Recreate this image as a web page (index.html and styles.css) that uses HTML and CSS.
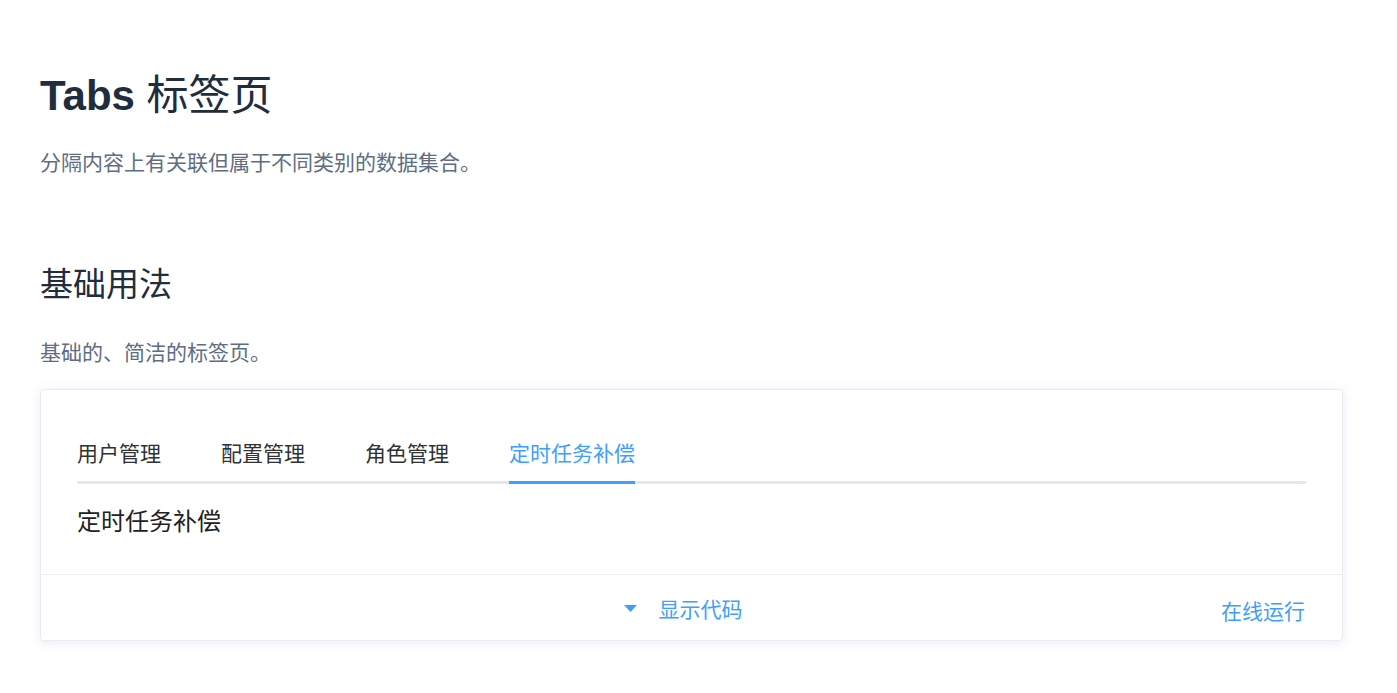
FILE: index.html
```html
<!DOCTYPE html>
<html lang="zh-CN">
<head>
    <meta charset="UTF-8">
    <meta name="viewport" content="width=device-width, initial-scale=1.0">
    <title>Tabs 标签页</title>
    <link rel="stylesheet" href="styles.css">
</head>
<body>
    <div class="page-component">
        <h2><strong>Tabs</strong> 标签页</h2>
        <p>分隔内容上有关联但属于不同类别的数据集合。</p>

        <h3>基础用法</h3>
        <p>基础的、简洁的标签页。</p>

        <div class="demo-block">
            <div class="source">
                <div class="tabs-header">
                    <div class="tab-item"><span class="tab-label">用户管理</span></div>
                    <div class="tab-item"><span class="tab-label">配置管理</span></div>
                    <div class="tab-item"><span class="tab-label">角色管理</span></div>
                    <div class="tab-item is-active"><span class="tab-label">定时任务补偿</span></div>
                </div>
                <div class="tab-pane">定时任务补偿</div>
            </div>
            <div class="demo-block-control">
                <div class="control-side"></div>
                <div class="control-toggle">
                    <svg class="caret" width="13" height="7" viewBox="0 0 13 7"><path d="M0 0 H13 L6.5 7 Z" fill="#409eff"/></svg>
                    <span>显示代码</span>
                </div>
                <div class="control-side right">
                    <button class="run-button">在线运行</button>
                </div>
            </div>
        </div>
    </div>
</body>
</html>
```

FILE: styles.css
```css
body {
    margin: 0;
    background: #fff;
    font-family: 'Liberation Sans', 'Noto Sans CJK SC', sans-serif;
    color: #1f2d3d;
}
.page-component {
    padding: 64px 54px 40px 40px;
}
h2 {
    margin: 0;
    font-size: 42px;
    font-weight: normal;
    line-height: 1.5;
    color: #1f2d3d;
}
h2 strong {font-weight: bold;}
h3 {
    margin: 81px 0 28px;
    font-size: 33px;
    font-weight: normal;
    line-height: 1.5;
    color: #1f2d3d;
}
p {
    margin: 20px 0 0;
    font-size: 21px;
    line-height: 1.5em;
    color: #5e6d82;
}
h3 + p {margin-top: 0;}

.demo-block {
    margin-top: 20px;
    border: 1px solid #ebebeb;
    border-radius: 4px;
    box-shadow: 0 0 12px 0 rgba(232, 237, 250, .6), 0 3px 6px 0 rgba(232, 237, 250, .5);
}
.source {
    padding: 34px 36px 37px;
}
.tabs-header {
    display: flex;
    margin-bottom: 22px;
    border-bottom: 3px solid #e4e7ed;
}
.tab-item {
    padding: 0 30px;
    margin-bottom: -3px;
}
.tab-item:first-child {padding-left: 0;}
.tab-item:last-child {padding-right: 0;}
.tab-label {
    display: block;
    height: 57px;
    line-height: 60px;
    font-size: 21px;
    color: #303133;
    border-bottom: 3px solid transparent;
}
.tab-item.is-active .tab-label {
    color: #409eff;
    border-bottom-color: #409eff;
}
.tab-pane {
    font-size: 24px;
    line-height: 31.5px;
    color: #222;
}

.demo-block-control {
    display: grid;
    grid-template-columns: 1fr auto 1fr;
    height: 65px;
    border-top: 1px solid #eaeefb;
    color: #409eff;
}
.control-toggle {
    display: flex;
    align-items: center;
    gap: 22px;
    margin-right: 17px;
    font-size: 21px;
}
.caret {display: block; margin-top: 2px;}
.control-side.right {
    display: flex;
    justify-content: flex-end;
    align-items: center;
    padding-right: 37px;
}
.run-button {
    margin-top: 5px;
    padding: 0;
    border: none;
    background: none;
    font-family: inherit;
    font-size: 21px;
    color: #409eff;
    cursor: pointer;
}
```
